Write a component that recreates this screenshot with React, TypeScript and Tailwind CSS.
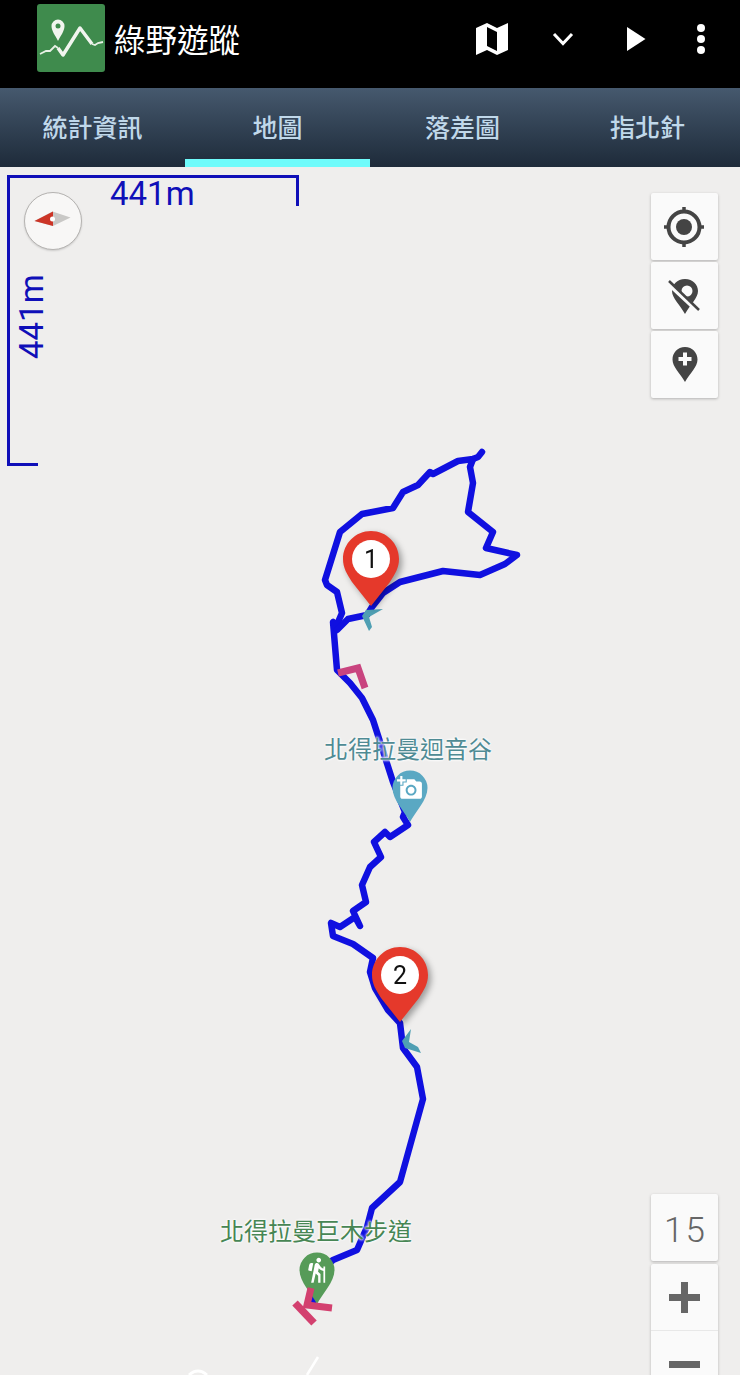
import React from 'react';
import { MdAddAPhoto, MdHiking } from 'react-icons/md';

const tabs = ['統計資訊', '地圖', '落差圖', '指北針'];

const trackPoints =
  '482,452 478,457 473,459 458,461 433,474 430,472 418,485 403,492 393,508 362,514 340,532 325,580 327,585 337,592 342,613 336,627 ' +
  '333,622 337,670 350,683 362,698 373,720 393,782 405,812 403,817 408,825 390,837 385,832 374,842 381,857 370,867 362,885 366,902 ' +
  '353,911 360,926 355,917 340,927 331,923 333,936 353,944 373,958 370,972 375,988 388,1010 400,1023 403,1048 417,1067 423,1099 ' +
  '400,1182 372,1208 367,1227 357,1250 333,1260 320,1272 313,1302';

const loopPoints =
  '473,459 470,467 473,483 468,512 493,532 486,548 517,555 505,564 480,575 443,571 400,582 383,593 372,607 367,615 348,619 337,630';

const Pin: React.FC<{ x: number; y: number; n: number }> = ({ x, y, n }) => (
  <g transform={`translate(${x} ${y})`} className="[filter:drop-shadow(3px_3px_3px_rgba(0,0,0,0.35))]">
    <path d="M0 -75 C-15.5 -75 -28 -62.5 -28 -47 C-28 -38 -24 -32 -19 -24 L0 0 L19 -24 C24 -32 28 -38 28 -47 C28 -62.5 15.5 -75 0 -75 Z" fill="#e5392b" />
    <circle cx="0" cy="-47" r="19" fill="#ffffff" />
    <text x="0" y="-38" textAnchor="middle" fontSize="25" fill="#111111" fontFamily="Roboto, sans-serif">
      {n}
    </text>
  </g>
);

const SmallPin: React.FC<{ cx: number; cy: number; tip: number; fill: string }> = ({ cx, cy, tip, fill }) => (
  <path
    d={`M${cx - 17.5} ${cy} A17.5 17.5 0 0 1 ${cx + 17.5} ${cy} C${cx + 17.5} ${cy + 12} ${cx + 5} ${tip - 10} ${cx} ${tip} C${cx - 5} ${tip - 10} ${cx - 17.5} ${cy + 12} ${cx - 17.5} ${cy} Z`}
    fill={fill}
  />
);

const MapButton: React.FC<{ children: React.ReactNode; className?: string }> = ({ children, className = '' }) => (
  <div className={`flex h-[67px] w-[67px] items-center justify-center rounded-[2px] bg-[#fafafa] shadow-[0_1px_3px_rgba(0,0,0,0.25)] ${className}`}>
    {children}
  </div>
);

export default function App() {
  return (
    <div className="flex h-[1375px] w-[740px] flex-col overflow-hidden bg-[#efeeed] font-['Noto_Sans_CJK_TC',sans-serif]">
      {/* action bar */}
      <div className="flex h-[88px] shrink-0 items-start bg-black pl-[37px] pr-[6px]">
        <svg width="68" height="68" viewBox="0 0 68 68" className="mt-[4px] shrink-0">
          <rect width="68" height="68" rx="3" fill="#3f8b4d" />
          <path d="M21 37 C18 31 14.500 27 14.500 22 A6.500 6.500 0 0 1 27.500 22 C27.500 27 24 31 21 37 Z" fill="#f1f5ef" />
          <circle cx="21" cy="22" r="2.500" fill="#3f8b4d" />
          <path d="M3 50 L9 47 L13 47 L18 42 L21 44" fill="none" stroke="#e8f1e6" strokeWidth="1.800" />
          <path d="M21 44 L26 51 L43 24 L55 40" fill="none" stroke="#f1f5ef" strokeWidth="3.500" strokeLinejoin="round" />
          <path d="M55 40 L58 41 L61 39 L66 38" fill="none" stroke="#e8f1e6" strokeWidth="1.800" />
        </svg>
        <div className="ml-[9px] mt-[15px] text-[31.500px] leading-[46px] text-white">綠野遊蹤</div>
        <div className="ml-auto mt-[22px] flex h-[33px] items-center">
          <div className="flex w-[64px] justify-center">
            <svg width="32" height="32" viewBox="0 0 32 32">
              <path
                fillRule="evenodd"
                d="M0 5 L11 0 L21 5 L32 0 L32 27 L21 32 L11 27 L0 32 Z M11 4 L11 23 L21 28 L21 9 Z"
                fill="#ffffff"
              />
            </svg>
          </div>
          <div className="flex w-[78px] justify-center">
            <svg width="24" height="16" viewBox="0 0 24 16">
              <path d="M3 3 L12 12.500 L21 3" fill="none" stroke="#ffffff" strokeWidth="3" />
            </svg>
          </div>
          <div className="flex w-[66px] justify-center pl-[2px]">
            <svg width="20" height="24" viewBox="0 0 20 24">
              <path d="M1 0 L19.500 12 L1 24 Z" fill="#ffffff" />
            </svg>
          </div>
          <div className="flex w-[66px] justify-center">
            <svg width="10" height="30" viewBox="0 0 10 30">
              <circle cx="5" cy="4" r="4" fill="#ffffff" />
              <circle cx="5" cy="15" r="4" fill="#ffffff" />
              <circle cx="5" cy="26" r="4" fill="#ffffff" />
            </svg>
          </div>
        </div>
      </div>

      {/* tabs */}
      <div className="flex h-[79px] shrink-0 bg-gradient-to-b from-[#46596e] to-[#1e2b3a]">
        {tabs.map((tab, i) => (
          <div
            key={tab}
            className={`flex w-[185px] items-center justify-center pb-[1px] text-[25px] font-medium text-[#c0d8ea] ${i === 1 ? 'border-b-[8px] border-[#6ffbfb] pt-[8px]' : ''}`}
          >
            {tab}
          </div>
        ))}
      </div>

      {/* map */}
      <div className="relative min-h-0 flex-1 overflow-hidden">
        {/* scale ruler */}
        <div className="absolute left-[7px] top-[8px] h-[291px] w-[292px] border-l-[3px] border-t-[3px] border-[#0f0fb8]" />
        <div className="absolute left-[296px] top-[8px] h-[31px] w-[3px] bg-[#0f0fb8]" />
        <div className="absolute left-[7px] top-[296px] h-[3px] w-[31px] bg-[#0f0fb8]" />
        <div className="absolute left-[110px] top-[8px] font-['Roboto',sans-serif] text-[33px] leading-[38px] text-[#0f0fb8]">441m</div>
        <div className="absolute left-[-10px] top-[131px] w-[84px] -rotate-90 text-center font-['Roboto',sans-serif] text-[33px] leading-[38px] text-[#0f0fb8]">
          441m
        </div>

        {/* compass */}
        <div className="absolute left-[24px] top-[25px] h-[58px] w-[58px] rounded-full border-[1.500px] border-[#b5b3b1] bg-[#f8f7f6] shadow-[0_1px_2px_rgba(0,0,0,0.15)]">
          <svg width="55" height="55" viewBox="0 0 55 55">
            <path d="M9.500 28 L27.500 18.500 L45.500 24.500 L28 33 Z" fill="#c9c8c6" />
            <path d="M9.500 28 L28 18.500 L28 33 Z" fill="#cc3527" />
            <circle cx="27.500" cy="26" r="2.500" fill="#ffffff" />
          </svg>
        </div>

        {/* track, y offset of the map area is 167 */}
        <svg width="740" height="1375" viewBox="0 0 740 1375" className="absolute left-0 top-[-167px]">
          <polyline points={trackPoints} fill="none" stroke="#1010e0" strokeWidth="6.500" strokeLinejoin="round" strokeLinecap="round" />
          <polyline points={loopPoints} fill="none" stroke="#1010e0" strokeWidth="6.500" strokeLinejoin="round" strokeLinecap="round" />
          <path d="M338 673 L358 668 L365 688" fill="none" stroke="#c9447f" strokeWidth="7" />
          <path d="M383 609 L366 610 L362 616 L369 631 L372 627 L369 617 Z" fill="#4f9fb3" />
          <path d="M411 1029 L402 1041 L405 1048 L421 1053 L418 1047 L409 1042 Z" fill="#4f9fb3" />
          <path d="M318 1357 L307 1375" fill="none" stroke="#ffffff" strokeWidth="2.500" />
          <path d="M189 1375 Q198 1367 207 1375" fill="none" stroke="#ffffff" strokeWidth="3" />
        </svg>

        {/* place labels */}
        <div className="absolute left-[324px] top-[564px] whitespace-nowrap text-[24px] leading-[34px] text-[#4f8b94] [text-shadow:0_0_3px_rgba(255,255,255,0.95),0_0_3px_rgba(255,255,255,0.95),0_0_2px_rgba(255,255,255,0.95)]">
          北得拉曼迴音谷
        </div>
        <div className="absolute left-[220px] top-[1046px] whitespace-nowrap text-[24px] leading-[34px] text-[#478654] [text-shadow:0_0_3px_rgba(255,255,255,0.95),0_0_3px_rgba(255,255,255,0.95),0_0_2px_rgba(255,255,255,0.95)]">
          北得拉曼巨木步道
        </div>

        {/* markers */}
        <svg width="740" height="1375" viewBox="0 0 740 1375" className="absolute left-0 top-[-167px]">
          <SmallPin cx={410} cy={788} tip={822} fill="#5aa8c3" />
          <MdAddAPhoto x={397} y={775} size={26} color="#ffffff" />
          <SmallPin cx={317} cy={1270} tip={1304} fill="#569b58" />
          <MdHiking x={303} y={1256} size={28} color="#ffffff" />
          <path d="M295 1303 L314 1323" fill="none" stroke="#d3406f" strokeWidth="7.500" />
          <path d="M311 1288 L307 1305 L332 1308" fill="none" stroke="#d3406f" strokeWidth="7" />
          <Pin x={371} y={606} n={1} />
          <Pin x={400} y={1022} n={2} />
        </svg>

        {/* top right map controls */}
        <div className="absolute left-[651px] top-[26px] flex flex-col gap-[2px]">
          <MapButton>
            <svg width="44" height="44" viewBox="0 0 44 44" className="-ml-[2px]">
              <circle cx="22" cy="22" r="15.500" fill="none" stroke="#444444" strokeWidth="4" />
              <circle cx="22" cy="22" r="8" fill="#444444" />
              <path d="M22 2 V8 M22 36 V42 M2 22 H8 M36 22 H42" stroke="#444444" strokeWidth="3.500" />
            </svg>
          </MapButton>
          <MapButton>
            <svg width="44" height="44" viewBox="0 0 44 44">
              <path d="M22 5 C14 5 9 11 9 17 C9 24 17 31 22 40 C27 31 35 24 35 17 C35 11 30 5 22 5 Z" fill="#444444" />
              <circle cx="24" cy="17" r="5.500" fill="#fafafa" />
              <path d="M5 9 L35 37" stroke="#fafafa" strokeWidth="5" />
              <path d="M6 7 L36 36" stroke="#444444" strokeWidth="2.500" />
            </svg>
          </MapButton>
          <MapButton>
            <svg width="44" height="44" viewBox="0 0 44 44">
              <path d="M22 4 C14.500 4 9.500 10 9.500 16.500 C9.500 24 17 30 22 39 C27 30 34.500 24 34.500 16.500 C34.500 10 29.500 4 22 4 Z" fill="#444444" />
              <path d="M22 9.500 V22.500 M15.500 16 H28.500" stroke="#fafafa" strokeWidth="4" />
            </svg>
          </MapButton>
        </div>

        {/* zoom controls */}
        <div className="absolute left-[651px] top-[1027px] flex flex-col gap-[3px]">
          <MapButton className="pl-[2px] pt-[7px] font-['Roboto',sans-serif] text-[35px] font-light tracking-[2px] text-[#666666]">15</MapButton>
          <div className="flex w-[67px] flex-col rounded-[2px] bg-[#fafafa] shadow-[0_1px_3px_rgba(0,0,0,0.25)]">
            <div className="flex h-[67px] items-center justify-center border-b border-[#e8e8e8]">
              <svg width="31" height="31" viewBox="0 0 31 31">
                <path d="M15.500 0 V31 M0 15.500 H31" stroke="#666666" strokeWidth="7" />
              </svg>
            </div>
            <div className="flex h-[67px] items-center justify-center">
              <svg width="31" height="7" viewBox="0 0 31 7">
                <rect width="31" height="7" fill="#666666" />
              </svg>
            </div>
          </div>
        </div>
      </div>
    </div>
  );
}
